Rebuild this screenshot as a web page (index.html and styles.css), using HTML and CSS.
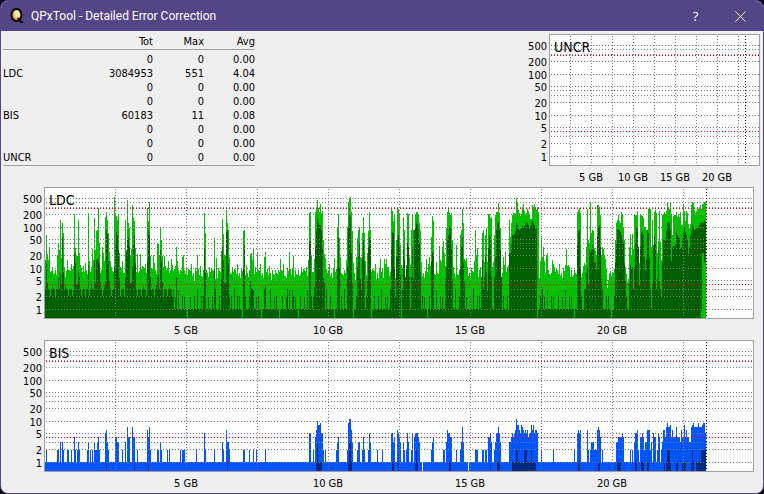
FILE: index.html
```html
<!DOCTYPE html>
<html lang="en">
<head>
<meta charset="utf-8">
<title>QPxTool - Detailed Error Correction</title>
<link rel="stylesheet" href="styles.css">
</head>
<body>
<div class="window">
  <header class="titlebar">
    <svg class="app-icon" viewBox="0 0 16 16" aria-hidden="true">
      <defs>
        <radialGradient id="disc" cx="0.6" cy="0.35" r="0.7">
          <stop offset="0" stop-color="#fffbe8"/>
          <stop offset="0.4" stop-color="#f8d890"/>
          <stop offset="0.75" stop-color="#e8a040"/>
          <stop offset="1" stop-color="#f4e040"/>
        </radialGradient>
      </defs>
      <ellipse cx="7.500" cy="7" rx="5" ry="6" fill="url(#disc)" stroke="#080408" stroke-width="2"/>
      <path d="M9 10l3 4h2" stroke="#080408" stroke-width="2" fill="none"/>
      <circle cx="7" cy="8" r="1" fill="#fff"/>
    </svg>
    <h1 class="title">QPxTool - Detailed Error Correction</h1>
    <button class="caption-button" type="button" aria-label="Help">?</button>
    <button class="caption-button" type="button" aria-label="Close">
      <svg class="close-icon" viewBox="0 0 11 11"><path d="M.5.5l10 10M10.500.5l-10 10"/></svg>
    </button>
  </header>
  <main class="content">
    <section class="summary">
      <table class="stats">
        <thead>
          <tr><th></th><th scope="col">Tot</th><th scope="col">Max</th><th scope="col">Avg</th></tr>
        </thead>
        <tbody>
          <tr><th scope="row"></th><td>0</td><td>0</td><td>0.00</td></tr>
          <tr><th scope="row">LDC</th><td>3084953</td><td>551</td><td>4.04</td></tr>
          <tr><th scope="row"></th><td>0</td><td>0</td><td>0.00</td></tr>
          <tr><th scope="row"></th><td>0</td><td>0</td><td>0.00</td></tr>
          <tr><th scope="row">BIS</th><td>60183</td><td>11</td><td>0.08</td></tr>
          <tr><th scope="row"></th><td>0</td><td>0</td><td>0.00</td></tr>
          <tr><th scope="row"></th><td>0</td><td>0</td><td>0.00</td></tr>
          <tr><th scope="row">UNCR</th><td>0</td><td>0</td><td>0.00</td></tr>
        </tbody>
      </table>
      <svg class="chart chart-small" data-series="UNCR"></svg>
    </section>
    <svg class="chart" data-series="LDC"></svg>
    <svg class="chart" data-series="BIS"></svg>
  </main>
</div>
<script src="charts.js"></script>
</body>
</html>
```
FILE: styles.css
```css
* {
  box-sizing: border-box;
}

body {
  margin: 0;
  background: #0c0618;
  color: #000;
  font: 11px/14px "DejaVu Sans Condensed", "DejaVu Sans", sans-serif;
}

.window {
  display: flex;
  flex-direction: column;
  min-height: 100vh;
  overflow: hidden;
  border: 1px solid #544587;
  border-radius: 8px;
  background: #efefef;
}

.titlebar {
  display: flex;
  align-items: center;
  height: 30px;
  padding-left: 8px;
  background: #544587;
  color: #fff;
}

.app-icon {
  width: 16px;
  height: 16px;
  margin-right: 6px;
}

.title {
  flex: 1;
  margin: 0;
  font: 12px/16px Roboto, "Noto Sans", sans-serif;
}

.caption-button {
  display: grid;
  place-items: center;
  width: 45px;
  height: 29px;
  padding: 0;
  border: 0;
  background: none;
  color: #fff;
  font: 13px/16px "Open Sans", "Noto Sans", sans-serif;
}

.close-icon {
  width: 11px;
  height: 11px;
  fill: none;
  stroke: #fff;
}

.content {
  padding: 3px 9px 0 0;
}

.summary {
  display: flex;
  justify-content: space-between;
  align-items: flex-start;
  margin-right: -6px;
}

.stats {
  width: 252px;
  margin-left: 2px;
  border-collapse: separate;
  border-spacing: 0;
  border-bottom: 1px solid #a0a0a0;
  table-layout: fixed;
}

.stats th,
.stats td {
  width: 51px;
  height: 14px;
  padding: 0;
  font-weight: normal;
  text-align: right;
}

.stats th:first-child {
  width: 99px;
  text-align: left;
}

.stats thead th {
  height: 16px;
  padding-top: 1px;
  border-bottom: 1px solid #a0a0a0;
}

.stats tbody::before {
  content: "";
  display: block;
  height: 3px;
}

.chart {
  display: block;
  width: 100%;
  height: 153px;
}

.chart-small {
  width: 254px;
}

.chart text {
  fill: #000;
}

.chart .axis-y {
  text-anchor: end;
}

.chart .axis-x {
  text-anchor: middle;
}

.chart .name {
  font-size: 14px;
}

.frame {
  fill: #fff;
  stroke: #a0a0a0;
}

.grid {
  stroke: #808080;
  stroke-dasharray: 1 2;
}

.limit {
  stroke: #ff0000;
  stroke-dasharray: 1 2;
}

.capacity {
  stroke: #000;
  stroke-dasharray: 1 2;
}

.ldc-max { fill: #00c000; }
.ldc-avg { fill: #006000; }
.bis-max { fill: #0055ff; }
.bis-avg { fill: #002a80; }
```
FILE: charts.js
```js
// Samples: "column:value,value,..." lists consecutive columns of the scan.
const COLUMNS = 710;
const SCANNED = 662;
const PLOT_HEIGHT = 132;

// LDC columns, as the distance from the top of the plot to the top of the bar.
const ldcMax = `1:73,48,67,73,60,85,84,80,87,86 13:68,56,63,33,71,36,46,80,90 23:73
30:27,61,69,69,33,66 44:26,74 48:62,73,31,63,44,43,21,56 58:60,66,74,30,25,33,46,65,74
70:10,26,29,33,27,66 81:33,63,13,36,41,68,62,18,31,34,61 93:67 96:67
103:21,34,15,69 109:68 113:56,57,68,41,53,69,80,69 127:72 132:60,74 138:70,68 153:68
160:26,46 170:51 172:71 177:64,32,47,68,68,23,36,43,70 199:44,43 206:67,66 208:73,62
213:66 220:70,65 236:72 245:65 249:69 264:73,26,25,68
270:72,25,22,13,21,25,17,26,24,53,67,71 290:71 293:40,27,51,70
302:73,40,15,12,10,25,44,76 312:70,51,43,40,70 317:71,46,30,46,74 323:66,44,25,43 336:72
340:72,77,72,80,80,89,85,22,24,34,28,91,53,22,22,26,58,78,81,30,43,90,78,26,27,70,78,43,27,43,51,27,25,25,27,36,43,75
382:72 384:77,70 387:50,29,34 392:75 395:59,73,75,60,54,66,79,41,25,22,26,28,26,53,80
412:58 416:48,43,22,36,72,74,71 430:74,43,68,61 436:80,90,46,43,75,48,41,75,27,27,31,30,80,84
449:75,48,28,25,25,16,26,41 459:70,78,65,85,80,78,33,50,36,28,26,26,27,11,15,23,26,29,27,20,17,24,27,26,22,24,28,32,32,18,20,17,21,23,20,25
496:74,49,70,60,74,86,68,66 508:73,77 521:78,62,79,78,80
533:25,23,21,26,90,86,79,76,78 542:60,22,53,56,15,46,43,44,61,64,68,18,18,20,28,68,60,62,68,72,82,101,93,86,84,89,85,86,82,85
571:53,36,33,28,34,36,25,27,40,53,80,87,95,92,60,47,68,47,62,28,28,28,24,62,76,28,28,29,31,40,40,43,44,22,22,22,60,33,88,25,23,26,66,54,24,55,73,66
618:28,27,25,27,24,16,20,22,16,27,48,29,28,28,25,30,27,30,25,38,38,18,24,34,24,26,37,41,37,18,15,16,23,26,24,22,22,20,18,22,17,17,15,15,25`;

const ldcAvg = `2:76,96,102 14:90,102,86,98,50,85 30:66,76,97,97,84,90 44:78
50:74,96,73,72,72,76,95 61:94,43,47,74,94 70:80,58,45,48,63,91 81:90,65,53,50,60,96,96,80,58,48,76
103:75,43,48,90 113:90,88,102,63,75,95 132:90 153:102 160:61,86 170:81 177:92,60,73,96,96,45,43,76,108
199:81,58 206:94,102 209:102 220:102,98 242:109,102 248:102 265:55,54 270:100,60,43,31,36,38,38,43,61,91,96
293:80,51,81 303:80,40,28,30,66,96 313:80,70,56,92 317:102,70,53,74 323:92,60,51,53
346:102,60,45,46,80,110,70,51,48,60,88,133,102,60,73,90,80,56,60,90,122,90,60,92,43,40,35,37,42,56,85
387:75,65,66 401:92,80,53,48,40,41,60,92 416:80,60,50,75,95 437:90,73,102,90,70,85,104,61,48,50,90
450:90,70,43,36,35,43,63,90 465:66,66,57,48,48,47,44,35,38,42,43,42,41,39,40,39,37,35,36,38,42,39,35,34,36,38,42,41
497:98,102 503:102 533:58,44,43,80 541:102,86,80,97,62,65,63,58,63,76,75,83,50,41,38,60,92,102
571:75,56,43,42,43,45,48,52,56,76,94 585:97,78,82,80,102,80,56,41,41,60,98,60,45,44,48,70,84,73,43,46,70,102,122,97,58,50,56,102,91,63,94,102
618:75,53,52,54,44,36,35,36,43,74,60,59,59,57,43,48,50,51,62,60,51,46,41,45,48,53,67,60,48,43,37,40,43,42,41,41,40,38,36,36,35,36,33,35,76`;

// Tail of the LDC scan, where the average falls away below the peaks.
const ldcTail = `657:123,66,66,75,75`;

// BIS columns, as error counts.
const bisMax = `2:2 13:2,2 16:3 18:3,2 23:2,2 27:2 30:4,2 33:2,3,2 43:2,3 46:2 48:2 50:3,2,2,3,4,2
61:5,6,3,2 71:4,4,3,3 78:2 81:3 83:7,4,4 88:7,4,4 93:2 103:6,4,7,2 113:2,2 116:3,2 123:2 125:2
136:2 138:2,2,2 152:2 160:5,2 170:2 178:3,2 182:6,3,3,2 199:2,2 205:2 209:2 212:2 221:2
265:5,5 269:2 271:4,6,10,8,8,9,5,5,2 281:2 292:2,3,4 303:2,9,11,11,6,3 313:2,3,3 318:2,4,2
324:2,5,3 333:2 338:2 347:5,5,3,4 353:6,5,4,3 359:3,2 362:2,5,3 367:2,5 370:4,5,5,5,4,3
387:2,3,4 399:2,2 402:3,6,5,5,4,4 412:2 416:2,3,7,3 431:2,2,2 438:2,2 441:2,2 444:4,4,5,3
450:2,3,5,5,7,5,3 465:3,3,4,5,4,5,6,11,8,8,6,5,8,7,6,5,6,5,6,4,5,5,8,6,8,5,6,6,5
497:2 509:2 530:2 533:5,6,5,6 543:6,2 546:2,3,3,3,2,2,2,6,7,6,4 558:2
572:3,3,4,4,4,4,5,4 586:2 588:2 590:3,5,5,6,2 596:4,4,5,4,2,3,3,6,6,6,2,3 609:5,4,4 613:2,5,4 617:2,3,6,6,4,7,9,7,7,8,4,6,4,4,4,7,4,4,4,3,6,4,4,8,4,6,4,4,3,3,7,8,9,7,7,7,7,9,7,7,7,8,9,9,5`;

const bisAvg = `62:1 90:1 104:1 183:1 272:1,3,1,1,1,1 304:1,3,3,1 348:1,1 354:1 371:1,2,1 405:1,1 446:1
453:1,1,1 468:1,1,1,1,2,2,1,1,1,1,1,1,2,2,2,1,1,1,1,2,1,1,1,1 534:1,1 554:1,1 573:1,1,1,1
591:1,1 597:1,1,1 603:1,1 620:1 622:1,2,2,2,1 632:1,1 638:1,1,1,1 647:1,2,1 652:1,1,1,1,1,2,2,2,2,2`;

const quietMax = [85, 80, 83, 84, 77, 82, 79, 80, 81, 74, 86, 83, 88, 78, 81, 82, 79, 85, 76, 83, 87, 80, 84];
const quietAvgEarly = [102, 102, 109, 102, 102, 102, 109, 102, 98, 102, 102, 109, 102];
const quietAvgLate = [122, 122, 109, 122, 122, 102, 122, 122, 122, 109, 122, 109, 122, 122, 133, 122, 122, 109, 122];

const levels = { 500: 11, 400: 15, 300: 20, 200: 27, 100: 40, 50: 52, 40: 56, 30: 61, 20: 68, 10: 81, 5: 93, 3: 102, 2: 109, 1: 122 };
const limits = [21, 97];
const labelled = [500, 200, 100, 50, 20, 10, 5, 2, 1];
const GUTTER = 43;

function expand(text, base) {
  const out = Array.from({ length: SCANNED }, (_, i) => base(i));
  for (const run of text.trim().split(/\s+/)) {
    const [start, values] = run.split(":");
    values.split(",").forEach((v, i) => { out[Number(start) + i] = Number(v); });
  }
  return out;
}

const countTop = v => (v > 0 ? Math.round(122 - 41 * Math.log10(v)) : PLOT_HEIGHT);
const series = {
  UNCR: [],
  LDC: [
    ["ldc-max", expand(ldcMax, i => quietMax[i % 23] + (i > 140 ? 3 : 0) + (i % 7 === 3 ? 3 : 0))],
    ["ldc-avg", expand(ldcAvg, i => (i < 130 ? quietAvgEarly[i % 13] : quietAvgLate[(i + (i >> 5)) % 19]))],
    ["ldc-max", expand(ldcTail, () => PLOT_HEIGHT)]
  ],
  BIS: [
    ["bis-max", expand(bisMax, i => (i === 378 || i === 424 ? 0 : 1)).map(countTop)],
    ["bis-avg", expand(bisAvg, () => 0).map(countTop)]
  ]
};

function add(svg, tag, attrs, text) {
  const el = document.createElementNS("http://www.w3.org/2000/svg", tag);
  for (const key in attrs) el.setAttribute(key, attrs[key]);
  if (text) el.textContent = text;
  svg.appendChild(el);
}

function draw(svg) {
  const name = svg.dataset.series;
  const width = Math.floor(svg.getBoundingClientRect().width) - GUTTER;
  const left = GUTTER;
  const at = column => left + Math.floor(column * width / COLUMNS);
  svg.replaceChildren();
  add(svg, "rect", { class: "frame", x: left + 0.5, y: 0.5, width: width - 1, height: PLOT_HEIGHT - 1 });
  for (const [style, tops] of series[name]) {
    let d = "";
    tops.slice(0, SCANNED).forEach((top, i) => {
      if (i > 0 && top < PLOT_HEIGHT) d += `M${at(i)} ${PLOT_HEIGHT - 1}V${top}H${at(i + 1)}V${PLOT_HEIGHT - 1}Z`;
    });
    add(svg, "path", { class: style, d, "shape-rendering": "crispEdges" });
  }
  const across = (style, y) => add(svg, "path", { class: style, d: `M${left + 2} ${y + 0.5}H${left + width - 1}` });
  const down = (style, x) => add(svg, "path", { class: style, d: `M${x + 0.5} 2V${PLOT_HEIGHT - 1}` });
  Object.values(levels).forEach(y => across("grid", y));
  for (let i = 1; i < 10; i++) down("grid", at(i * 71));
  limits.forEach(y => across("limit", y));
  down("capacity", at(SCANNED));
  for (const v of labelled) add(svg, "text", { class: "axis-y", x: left - 2, y: levels[v] + 5 }, String(v));
  for (let i = 1; i < 5; i++) add(svg, "text", { class: "axis-x", x: at(i * 142), y: 147 }, `${i * 5} GB`);
  add(svg, "text", { class: "name", x: left + 5, y: 18 }, name);
}

const drawAll = () => document.querySelectorAll(".chart").forEach(draw);
drawAll();
window.addEventListener("resize", drawAll);
```
